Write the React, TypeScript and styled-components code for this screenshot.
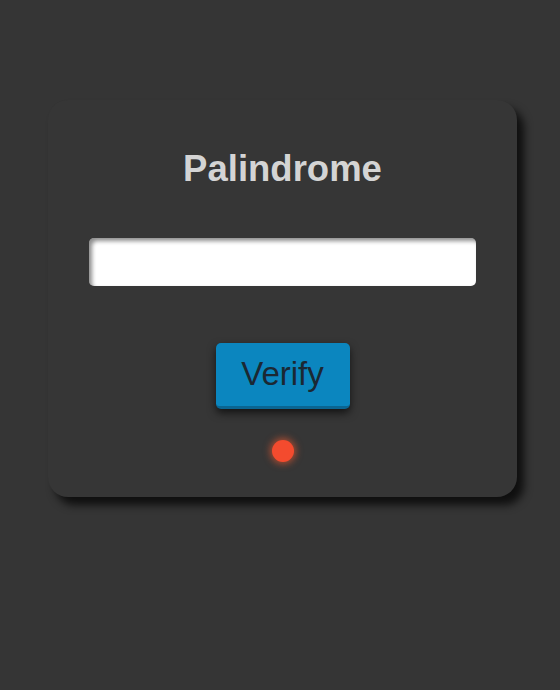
import React from "react";
import styled, { createGlobalStyle } from "styled-components";

const Global = createGlobalStyle`
  html, body {
    margin: 0;
    padding: 0;
    background: #353535;
    font-family: "Liberation Sans", Arial, sans-serif;
  }
`;

const Page = styled.div`
  display: flex;
  justify-content: center;
  align-items: flex-start;
  padding: 100px 0 0 5px;
  min-height: 590px;
`;

const Card = styled.div`
  width: 469px;
  box-sizing: border-box;
  padding: 48px 41px 35px 41px;
  background: #363636;
  border-radius: 20px;
  box-shadow: 7px 8px 8px rgba(0, 0, 0, 0.72);
  display: flex;
  flex-direction: column;
  align-items: center;
`;

const Title = styled.h1`
  margin: 0;
  font-size: 36.5px;
  line-height: 41px;
  font-weight: 700;
  color: #d4d4d4;
`;

const Field = styled.input`
  margin-top: 49px;
  width: 100%;
  height: 48px;
  box-sizing: border-box;
  border: none;
  border-radius: 5px;
  background: #fff;
  box-shadow: inset 3px 3px 4px rgba(0, 0, 0, 0.45);
  outline: none;
  font-size: 20px;
  padding: 0 12px;
  font-family: inherit;
`;

const Button = styled.button`
  margin-top: 57px;
  width: 134px;
  height: 66px;
  box-sizing: border-box;
  border: none;
  border-bottom: 3px solid #0a6592;
  border-radius: 5px;
  background: #0b86bf;
  color: #1b2833;
  font-family: inherit;
  font-size: 33px;
  padding: 0 0 2px 0;
  box-shadow: 0 4px 9px rgba(0, 0, 0, 0.65);
  cursor: pointer;
`;

const Lamp = styled.div<{ $on: boolean }>`
  margin-top: 31px;
  width: 22px;
  height: 22px;
  border-radius: 50%;
  background: ${(p) => (p.$on ? "#3fd33f" : "#f44b2e")};
  box-shadow: 0 0 7px 2px ${(p) => (p.$on ? "rgba(63,211,63,0.6)" : "rgba(244,90,46,0.6)")};
`;

export default function App() {
  const [text, setText] = React.useState("");
  const [ok, setOk] = React.useState(false);
  const verify = () => {
    const s = text.toLowerCase().replace(/[^a-z0-9]/g, "");
    setOk(s.length > 0 && s === s.split("").reverse().join(""));
  };
  return (
    <>
      <Global />
      <Page>
        <Card>
          <Title>Palindrome</Title>
          <Field value={text} onChange={(e) => setText(e.target.value)} />
          <Button onClick={verify}>Verify</Button>
          <Lamp $on={ok} />
        </Card>
      </Page>
    </>
  );
}
